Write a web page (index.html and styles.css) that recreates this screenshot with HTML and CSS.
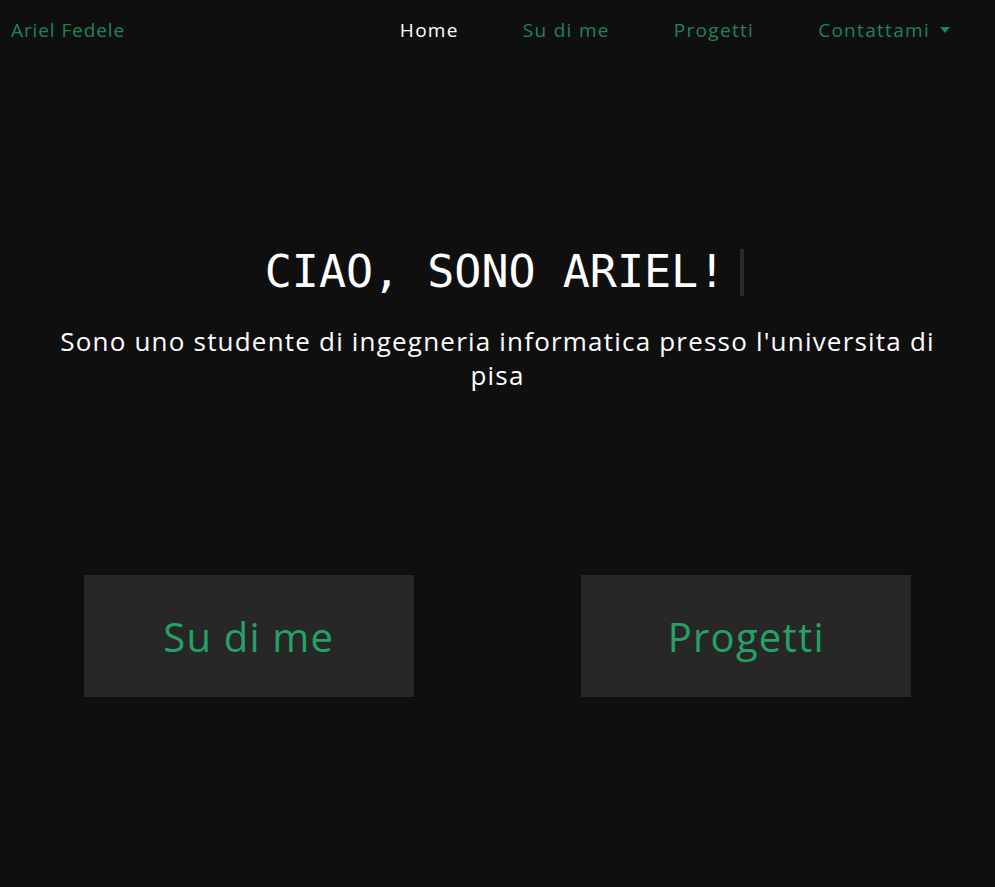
FILE: index.html
```html
<!DOCTYPE html>
<html lang="it">
<head>
<meta charset="utf-8">
<title>Ariel Fedele</title>
<link rel="stylesheet" href="styles.css">
</head>
<body>
<nav class="navbar">
  <a class="brand" href="#">Ariel Fedele</a>
  <ul class="nav-links">
    <li><a class="nav-link active" href="#">Home</a></li>
    <li><a class="nav-link" href="#">Su di me</a></li>
    <li><a class="nav-link" href="#">Progetti</a></li>
    <li><a class="nav-link dropdown" href="#">Contattami<span class="caret"></span></a></li>
  </ul>
</nav>
<main>
  <section class="hero">
    <h1 class="title"><span class="typed">CIAO, SONO ARIEL!</span><span class="cursor"></span></h1>
    <p class="subtitle">Sono uno studente di ingegneria informatica presso l'universita di pisa</p>
  </section>
  <section class="buttons">
    <div class="col"><a class="big-btn" href="#">Su di me</a></div>
    <div class="col"><a class="big-btn" href="#">Progetti</a></div>
  </section>
</main>
</body>
</html>
```
FILE: styles.css
```css
* { box-sizing: border-box; }
html, body {
  margin: 0;
  padding: 0;
  background: #0f0f0f;
  font-family: "Open Sans", "Noto Sans", sans-serif;
  color: #fff;
}
a { text-decoration: none; }
.navbar {
  height: 60px;
  display: flex;
  align-items: center;
  padding: 0 11px;
}
.brand {
  color: #198754;
  font-size: 19px;
  letter-spacing: 0.9px;
}
.nav-links {
  list-style: none;
  margin: 0 0 0 auto;
  padding: 0 34px 0 0;
  display: flex;
}
.nav-link {
  display: flex;
  align-items: center;
  font-size: 19px;
  letter-spacing: 1.3px;
  color: #198754;
  padding: 0 32px;
}
.nav-links li:last-child .nav-link { padding-right: 0; }
.nav-link.active { color: #fff; }
.caret {
  display: inline-block;
  width: 0;
  height: 0;
  margin-left: 10px;
  border-left: 5px solid transparent;
  border-right: 5px solid transparent;
  border-top: 6px solid #198754;
}
.hero {
  margin-top: 186px;
  text-align: center;
  padding: 0 40px;
}
.title {
  margin: 0;
  padding-left: 14px;
  font-family: "DejaVu Sans Mono", monospace;
  font-weight: normal;
  font-size: 45px;
  line-height: 52px;
  display: inline-flex;
  align-items: center;
}
.cursor {
  display: inline-block;
  width: 4px;
  height: 47px;
  background: #2a2a2a;
  margin-left: 15px;
}
.subtitle {
  margin: 26px 0 0;
  font-size: 26px;
  letter-spacing: 1.2px;
  line-height: 34px;
}
.buttons {
  display: flex;
  margin-top: 183px;
}
.col {
  flex: 1;
  display: flex;
  justify-content: center;
}
.big-btn {
  width: 330px;
  height: 122px;
  background: #272727;
  color: #26a065;
  font-size: 40px;
  letter-spacing: 1.2px;
  display: flex;
  align-items: center;
  justify-content: center;
}
```
